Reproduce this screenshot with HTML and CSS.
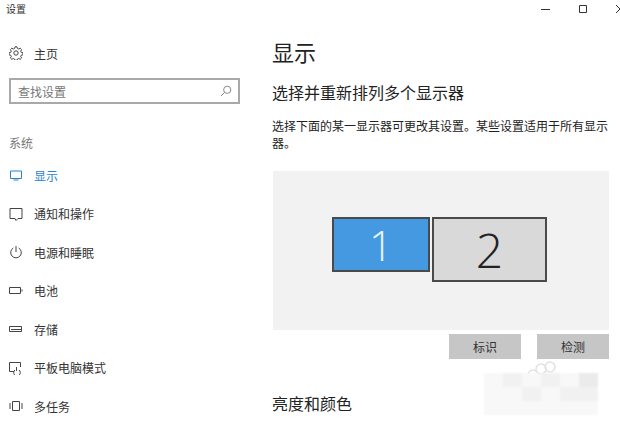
FILE: index.html
```html
<!DOCTYPE html>
<html lang="zh-CN">
<head>
  <meta charset="UTF-8">
  <title>设置</title>
  <link rel="stylesheet" href="styles.css">
</head>
<body>
  <div class="window">
    <header class="titlebar">
      <span class="app-name">设置</span>
      <div class="win-controls">
        <svg class="win-btn" width="10" height="10" viewBox="0 0 10 10"><path d="M0 5.5h9" stroke="#333" fill="none"/></svg>
        <svg class="win-btn" width="10" height="10" viewBox="0 0 10 10"><path d="M1.5 1.5h7v7h-7z" stroke="#333" fill="none"/></svg>
        <svg class="win-btn" width="10" height="10" viewBox="0 0 10 10"><path d="M1 1l8 8M9 1l-8 8" stroke="#333" fill="none"/></svg>
      </div>
    </header>

    <div class="content">
      <!-- Sidebar -->
      <aside class="sidebar">
        <a class="home">
          <svg class="icon" width="14" height="14" viewBox="0 0 14 14" fill="none" stroke="#444">
            <circle cx="7" cy="7" r="2.2"/>
            <path d="M6 .8h2l.4 1.7 1.3.6 1.5-.9 1.4 1.4-.9 1.5.6 1.3 1.7.4v2l-1.7.4-.6 1.3.9 1.5-1.4 1.4-1.5-.9-1.3.6-.4 1.2H6l-.4-1.2-1.3-.6-1.5.9-1.4-1.4.9-1.5-.6-1.3-1.7-.4v-2l1.7-.4.6-1.3-.9-1.5 1.4-1.4 1.5.9 1.3-.6z"/>
          </svg>
          <span>主页</span>
        </a>
        <div class="search">
          <span class="search-text">查找设置</span>
          <svg width="12" height="12" viewBox="0 0 12 12" fill="none" stroke="#888"><circle cx="7.2" cy="4.8" r="3.6"/><path d="M4.6 7.4L1 11"/></svg>
        </div>
        <div class="group-label">系统</div>
        <nav class="nav">
          <a class="nav-item active">
            <svg class="icon" width="14" height="14" viewBox="0 0 14 14" fill="none" stroke="#2a86c8"><path d="M1.5 3h11v7.5h-11zM4.5 12h5" /></svg>
            <span>显示</span>
          </a>
          <a class="nav-item">
            <svg class="icon" width="14" height="14" viewBox="0 0 14 14" fill="none" stroke="#444"><path d="M1 1.5h12v10H9l-2 2-1-2H1z"/></svg>
            <span>通知和操作</span>
          </a>
          <a class="nav-item">
            <svg class="icon" width="14" height="14" viewBox="0 0 14 14" fill="none" stroke="#444"><path d="M7 1v6M4.3 3A5.3 5.3 0 1 0 9.700 3"/></svg>
            <span>电源和睡眠</span>
          </a>
          <a class="nav-item">
            <svg class="icon" width="14" height="14" viewBox="0 0 14 14" fill="none" stroke="#444"><path d="M.5 3.500h11v6H.5zM13 5.500v2"/></svg>
            <span>电池</span>
          </a>
          <a class="nav-item">
            <svg class="icon" width="14" height="14" viewBox="0 0 14 14" fill="none" stroke="#444"><path d="M.5 4.500h12v5H.5zM2 7.500h10"/></svg>
            <span>存储</span>
          </a>
          <a class="nav-item">
            <svg class="icon" width="14" height="14" viewBox="0 0 14 14" fill="none" stroke="#444"><path d="M5 10.500H.5v-9h11V6"/><path d="M7.500 5v4M6 8a3.300 3.300 0 1 0 4 0" transform="translate(0 1)"/></svg>
            <span>平板电脑模式</span>
          </a>
          <a class="nav-item">
            <svg class="icon" width="14" height="14" viewBox="0 0 14 14" fill="none" stroke="#444"><path d="M3.500 2.500h7v9h-7zM1 4v6M13 4v6"/></svg>
            <span>多任务</span>
          </a>
        </nav>
      </aside>

      <!-- Main -->
      <main class="main">
        <h1 class="page-title">显示</h1>
        <h2 class="section-title">选择并重新排列多个显示器</h2>
        <p class="desc">选择下面的某一显示器可更改其设置。某些设置适用于所有显示器。</p>
        <div class="arrange">
          <div class="monitor selected">1</div>
          <div class="monitor second">2</div>
        </div>
        <div class="actions">
          <button class="btn">标识</button>
          <button class="btn">检测</button>
        </div>
        <h2 class="section-title brightness">亮度和颜色</h2>
      </main>
    </div>

    <!-- blurred watermark in the corner -->
    <svg class="wm-rings" width="36" height="22" viewBox="0 0 36 22" fill="none" stroke="#e2e2e2" stroke-width="1.500"><circle cx="7" cy="15" r="5"/><circle cx="15" cy="9" r="5"/><circle cx="24" cy="7" r="5"/></svg>
    <div class="watermark">
      <i></i><i class="dark"></i><i></i><i class="dark"></i><i></i><i class="darker"></i>
      <i></i><i></i><i class="dark"></i><i></i><i class="dark"></i><i class="dark"></i>
      <i></i><i></i><i></i><i></i><i></i><i></i>
    </div>
  </div>
</body>
</html>
```

FILE: styles.css
```css
/* General Reset */
body, h1, h2, p {
  margin: 0;
  padding: 0;
}

body {
  font-family: "Liberation Sans", "Noto Sans CJK SC", sans-serif;
  background-color: #fff;
  color: #222;
  overflow: hidden;
}

.window {
  position: relative;
  width: 620px;
  height: 422px;
  overflow: hidden;
}

/* Title bar */
.titlebar {
  display: flex;
  justify-content: space-between;
  align-items: center;
  height: 17px;
  padding-left: 6px;
}

.app-name {
  font-size: 10px;
  color: #333;
}

.win-controls {
  display: flex;
  gap: 27px;
  margin-right: -5px;
}

.content {
  display: flex;
}

/* Sidebar */
.sidebar {
  width: 272px;
  flex-shrink: 0;
  padding-left: 9px;
  box-sizing: border-box;
}

.home,
.nav-item {
  display: flex;
  align-items: center;
  gap: 11px;
  font-size: 12px;
  color: #333;
}

.home {
  height: 20px;
  margin-top: 26px;
}

.icon {
  flex-shrink: 0;
}

.search {
  display: flex;
  justify-content: space-between;
  align-items: center;
  width: 231px;
  height: 26px;
  margin-top: 15px;
  padding: 0 6px 0 7px;
  box-sizing: border-box;
  border: 2px solid #a9a9a9;
}

.search-text {
  font-size: 12px;
  color: #777;
}

.group-label {
  margin-top: 32px;
  font-size: 12px;
  line-height: 16px;
  color: #777;
}

.nav {
  display: flex;
  flex-direction: column;
  margin-top: 4px;
}

.nav-item {
  height: 38.5px;
}

.nav-item.active {
  color: #2a86c8;
}

/* Main area */
.main {
  flex: 1;
  min-width: 0;
}

.page-title {
  margin-top: 24px;
  font-size: 22px;
  line-height: 26px;
  font-weight: normal;
  color: #222;
}

.section-title {
  font-size: 16px;
  line-height: 22px;
  font-weight: normal;
  color: #222;
}

.page-title + .section-title {
  margin-top: 16px;
}

.desc {
  width: 340px;
  margin-top: 14px;
  font-size: 12px;
  line-height: 17px;
  color: #222;
}

/* Monitor arrangement */
.arrange {
  display: flex;
  align-items: flex-start;
  gap: 2px;
  width: 336px;
  height: 159px;
  margin: 18px 0 0 1px;
  padding: 46px 0 0 59px;
  box-sizing: border-box;
  background-color: #f2f2f2;
}

.monitor {
  display: flex;
  justify-content: center;
  align-items: center;
  box-sizing: border-box;
  border: 2px solid #4a4a4a;
  font-family: "Open Sans", "Liberation Sans", sans-serif;
  font-weight: 300;
}

.monitor.selected {
  width: 98px;
  height: 55px;
  background-color: #4499e0;
  color: #e8f4fd;
  font-size: 42px;
}

.monitor.second {
  width: 115px;
  height: 65px;
  background-color: #d9d9d9;
  color: #222;
  font-size: 48px;
}

.actions {
  display: flex;
  justify-content: flex-end;
  gap: 16px;
  width: 337px;
  margin-top: 4px;
}

.btn {
  width: 72px;
  height: 25px;
  padding: 0;
  border: none;
  background-color: #c6c6c6;
  font-family: inherit;
  font-size: 12px;
  color: #333;
}

.section-title.brightness {
  margin-top: 35px;
}

/* Watermark */
.watermark {
  position: absolute;
  left: 484px;
  top: 373px;
  display: grid;
  grid-template-columns: repeat(6, 19px);
  grid-auto-rows: 14px;
  filter: blur(1px);
}

.watermark i {
  background-color: #f8f8f8;
}

.watermark i.dark {
  background-color: #f1f1f1;
}

.watermark i.darker {
  background-color: #ebebeb;
}

.wm-rings {
  position: absolute;
  left: 526px;
  top: 360px;
}
```
